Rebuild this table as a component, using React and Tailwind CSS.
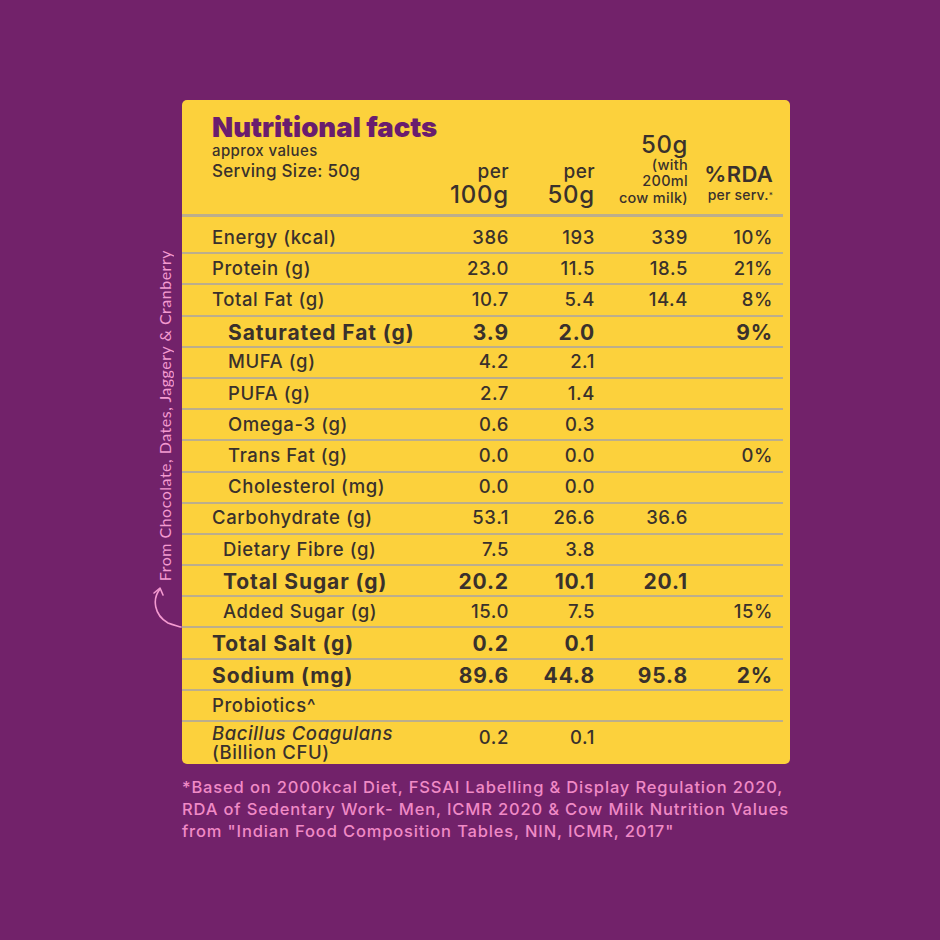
import React from "react";

const rows = [
  { label: "Energy (kcal)", v: ["386", "193", "339", "10%"] },
  { label: "Protein (g)", v: ["23.0", "11.5", "18.5", "21%"] },
  { label: "Total Fat (g)", v: ["10.7", "5.4", "14.4", "8%"] },
  { label: "Saturated Fat (g)", v: ["3.9", "2.0", "", "9%"], indent: "pl-4", bold: true },
  { label: "MUFA (g)", v: ["4.2", "2.1", "", ""], indent: "pl-4" },
  { label: "PUFA (g)", v: ["2.7", "1.4", "", ""], indent: "pl-4" },
  { label: "Omega-3 (g)", v: ["0.6", "0.3", "", ""], indent: "pl-4" },
  { label: "Trans Fat (g)", v: ["0.0", "0.0", "", "0%"], indent: "pl-4" },
  { label: "Cholesterol (mg)", v: ["0.0", "0.0", "", ""], indent: "pl-4" },
  { label: "Carbohydrate (g)", v: ["53.1", "26.6", "36.6", ""] },
  { label: "Dietary Fibre (g)", v: ["7.5", "3.8", "", ""], indent: "pl-[11px]" },
  { label: "Total Sugar (g)", v: ["20.2", "10.1", "20.1", ""], indent: "pl-[11px]", bold: true },
  { label: "Added Sugar (g)", v: ["15.0", "7.5", "", "15%"], indent: "pl-[11px]" },
  { label: "Total Salt (g)", v: ["0.2", "0.1", "", ""], bold: true },
  { label: "Sodium (mg)", v: ["89.6", "44.8", "95.8", "2%"], bold: true },
  { label: "Probiotics^", v: ["", "", "", ""] },
];

const grid = "grid grid-cols-[minmax(0,1fr)_86px_86px_93px_85px] pl-[30px] pr-[10px] mr-[7px]";

function Row({ r }) {
  const size = r.bold
    ? "text-[21px] font-bold tracking-[0.9px]"
    : "text-[18.5px] font-medium tracking-[0.6px]";
  return (
    <div className={`${grid} h-[31.2px] items-center border-b-2 border-[#bcae8c] ${size}`}>
      <div className={`${r.indent || ""} whitespace-nowrap`}>{r.label}</div>
      {r.v.map((x, i) => (
        <div key={i} className="text-right">
          {x}
        </div>
      ))}
    </div>
  );
}

export default function App() {
  return (
    <div
      className="w-[940px] h-[940px] bg-[#72226a] flex flex-col pt-[100px] pl-[148px]"
      style={{ fontFamily: "Inter, 'Open Sans', sans-serif" }}
    >
      <div className="flex">
        {/* side note */}
        <div className="w-[34px] flex flex-col items-center pt-[150px]">
          <div
            className="[writing-mode:vertical-rl] rotate-180 text-[#f49ad0] text-[16px] tracking-[0.5px] leading-none"
            style={{ fontFamily: "Lato, sans-serif" }}
          >
            From Chocolate, Dates, Jaggery &amp; Cranberry
          </div>
          <svg width="34" height="48" viewBox="0 0 34 48" className="mt-[2px]" fill="none">
            <path d="M12 6 C4 16, 6 32, 20 40 C25 42, 30 43, 33 44" stroke="#f49ad0" strokeWidth="1.6" strokeLinecap="round" />
            <path d="M6 10 L12 5 L15 12" stroke="#f49ad0" strokeWidth="1.6" strokeLinecap="round" strokeLinejoin="round" />
          </svg>
        </div>

        {/* card */}
        <div className="w-[608px] h-[664px] bg-[#fcd13c] rounded-[5px] text-[#3a312c] flex flex-col">
          <div className={`${grid} items-end pt-[12px] pb-[6px] border-b-[3px] border-[#bcae8c]`}>
            <div className="flex flex-col whitespace-nowrap">
              <div className="text-[27.5px] font-black text-[#6a1d6e] leading-[30px] tracking-[0px]">
                Nutritional facts
              </div>
              <div className="text-[15px] font-medium leading-[18px] tracking-[0.4px]">approx values</div>
              <div className="text-[17px] font-medium leading-[22px] tracking-[0.3px] mb-[26px]">Serving Size: 50g</div>
            </div>
            <div className="text-right flex flex-col items-end">
              <div className="text-[19px] font-medium leading-[20px] tracking-[0.4px]">per</div>
              <div className="text-[24px] font-medium leading-[26px] tracking-[0.8px]">100g</div>
            </div>
            <div className="text-right flex flex-col items-end">
              <div className="text-[19px] font-medium leading-[20px] tracking-[0.4px]">per</div>
              <div className="text-[24px] font-medium leading-[26px] tracking-[0.8px]">50g</div>
            </div>
            <div className="text-right flex flex-col items-end">
              <div className="text-[24px] font-medium leading-[24px] tracking-[0.6px]">50g</div>
              <div className="text-[14.5px] font-medium leading-[16px] tracking-[0.3px]">(with</div>
              <div className="text-[14.5px] font-medium leading-[16px] tracking-[0.3px]">200ml</div>
              <div className="text-[14.5px] font-medium leading-[17px] tracking-[0.3px] mb-[2px] whitespace-nowrap">cow milk)</div>
            </div>
            <div className="text-right flex flex-col items-end mb-[4px]">
              <div className="text-[22px] font-semibold leading-[24px] tracking-[0.3px]">%RDA</div>
              <div className="text-[14px] font-medium leading-[18px] tracking-[0.2px] whitespace-nowrap">
                per serv.<span className="text-[8px] align-top">*</span>
              </div>
            </div>
          </div>

          <div className="pt-[6px]">
            {rows.map((r) => (
              <Row key={r.label} r={r} />
            ))}
            <div className={`${grid} pt-[2px] text-[18.5px] font-medium tracking-[0.6px]`}>
              <div className="leading-[19px] whitespace-nowrap">
                <div className="italic">Bacillus Coagulans</div>
                <div>(Billion CFU)</div>
              </div>
              <div className="text-right leading-[26px]">0.2</div>
              <div className="text-right leading-[26px]">0.1</div>
              <div />
              <div />
            </div>
          </div>
        </div>
      </div>

      <div className="ml-[34px] mt-[12px] text-[#f08ac6] text-[16.5px] font-medium leading-[22px] tracking-[0.85px] w-[640px]">
        <div className="whitespace-nowrap">*Based on 2000kcal Diet, FSSAI Labelling &amp; Display Regulation 2020,</div>
        <div className="whitespace-nowrap">RDA of Sedentary Work- Men, ICMR 2020 &amp; Cow Milk Nutrition Values</div>
        <div className="whitespace-nowrap">from "Indian Food Composition Tables, NIN, ICMR, 2017"</div>
      </div>
    </div>
  );
}
